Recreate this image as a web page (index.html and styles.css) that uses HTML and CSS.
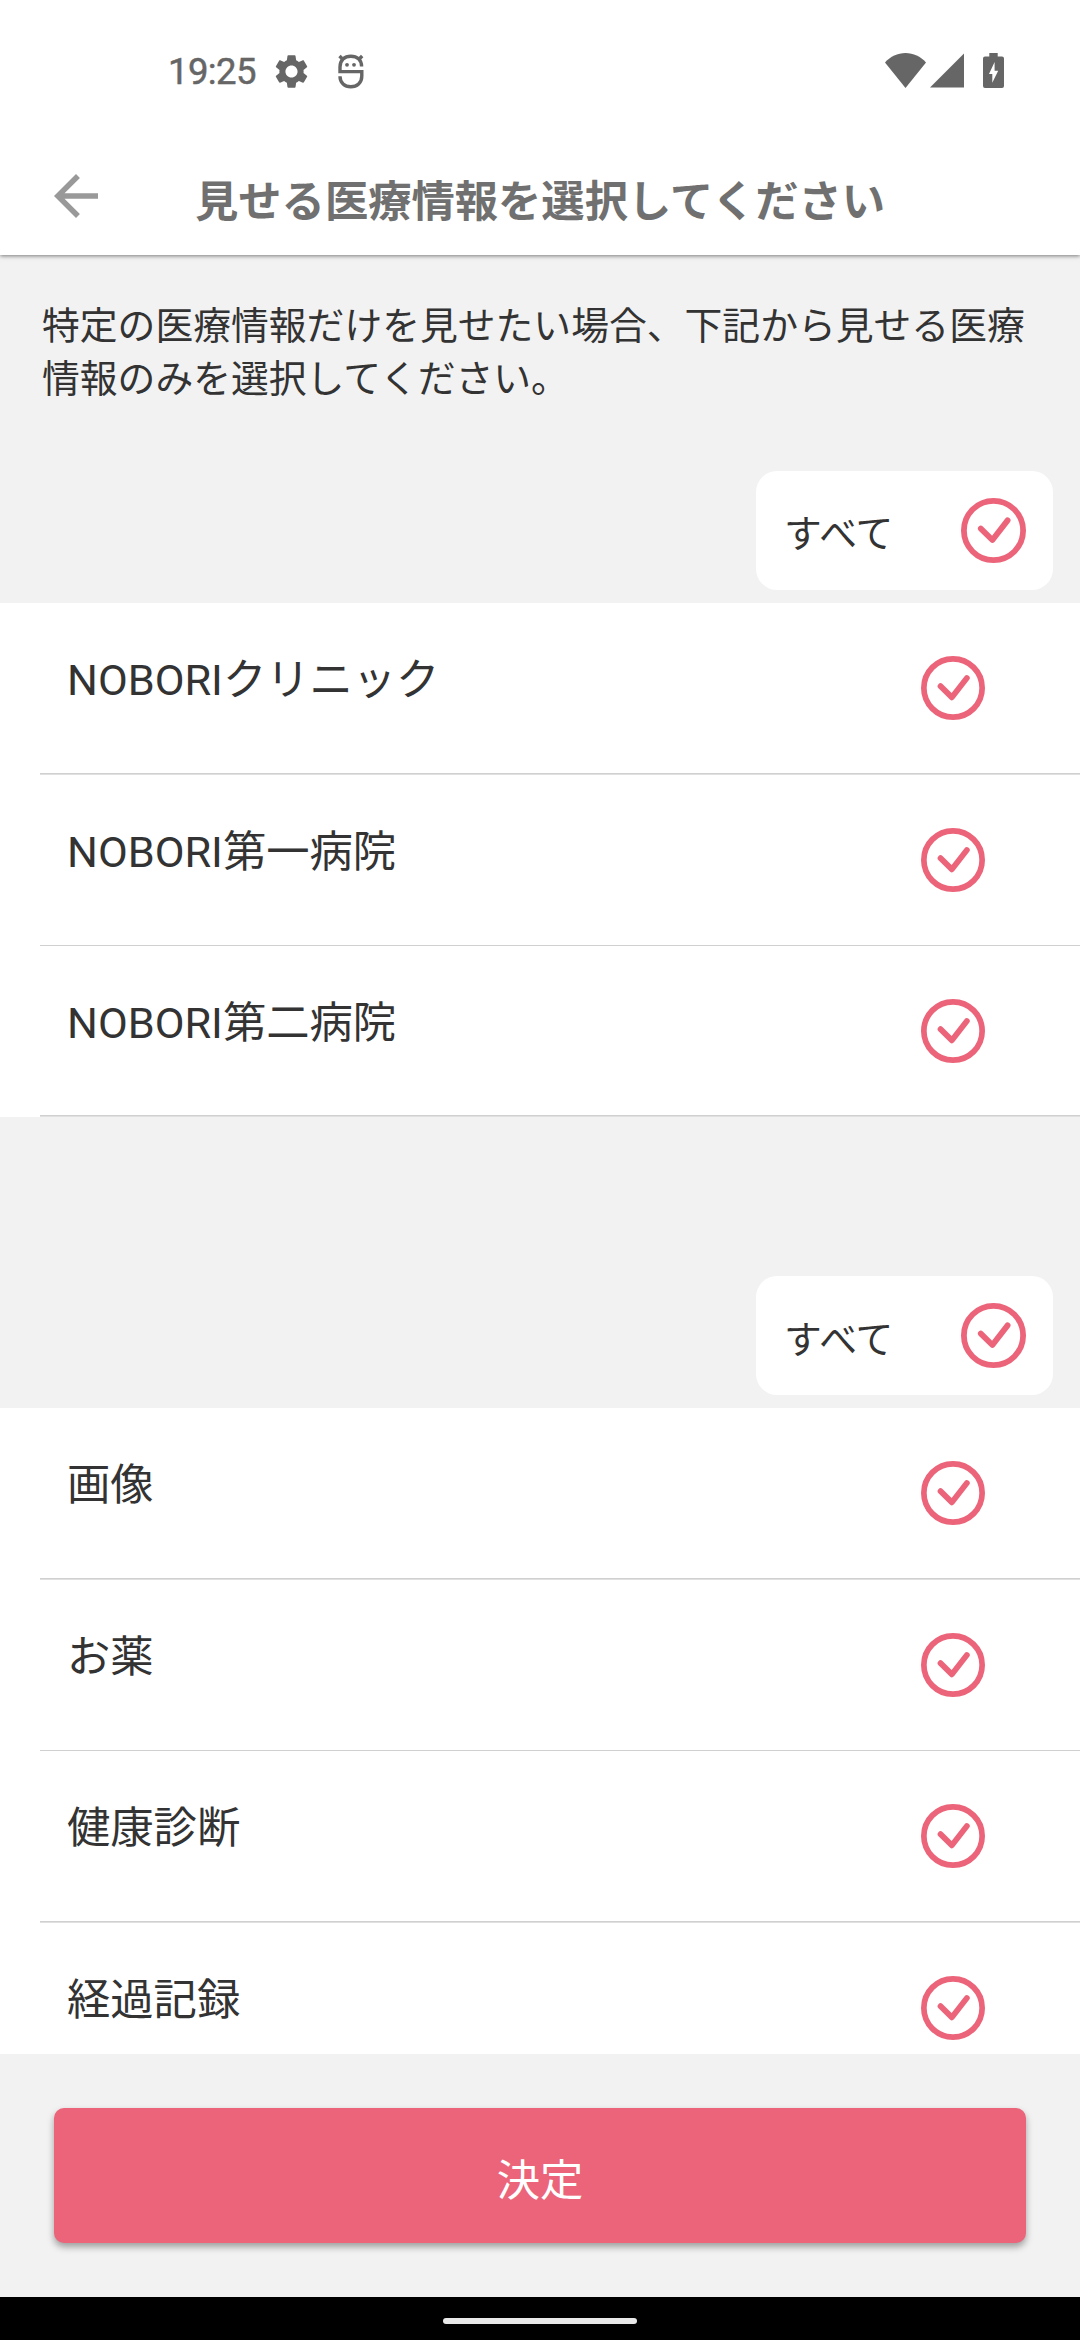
FILE: index.html
```html
<!DOCTYPE html>
<html lang="ja">
<head>
<meta charset="utf-8">
<title>見せる医療情報を選択してください</title>
<link rel="stylesheet" href="styles.css">
</head>
<body>
<svg width="0" height="0" class="defs" aria-hidden="true">
  <symbol id="check" viewBox="0 0 65 65">
    <circle cx="32.5" cy="32.5" r="29.6" fill="none" stroke="#ec6479" stroke-width="5.8"/>
    <path d="M19.8 30.6 31.4 42 46.6 22.4" fill="none" stroke="#ec6479" stroke-width="5.8" stroke-linecap="round" stroke-linejoin="round"/>
  </symbol>
</svg>
<div class="screen">
  <header class="top">
    <div class="status">
      <span class="clock">19:25</span>
      <svg class="gear" viewBox="2.2 2 19.6 20"><path fill="#666" d="M19.14 12.94c.04-.3.06-.61.06-.94 0-.32-.02-.64-.07-.94l2.03-1.58c.18-.14.23-.41.12-.61l-1.92-3.32c-.12-.22-.37-.29-.59-.22l-2.39.96c-.5-.38-1.03-.7-1.62-.94l-.36-2.54c-.04-.24-.24-.41-.48-.41h-3.84c-.24 0-.43.17-.47.41l-.36 2.54c-.59.24-1.13.57-1.62.94l-2.39-.96c-.22-.08-.47 0-.59.22L2.74 8.87c-.12.21-.08.47.12.61l2.03 1.58c-.05.3-.09.63-.09.94s.02.64.07.94l-2.03 1.58c-.18.14-.23.41-.12.61l1.92 3.32c.12.22.37.29.59.22l2.39-.96c.5.38 1.03.7 1.62.94l.36 2.54c.05.24.24.41.48.41h3.84c.24 0 .44-.17.47-.41l.36-2.54c.59-.24 1.13-.56 1.62-.94l2.39.96c.22.08.47 0 .59-.22l1.92-3.32c.12-.22.07-.47-.12-.61l-2.01-1.58zM12 15.6c-1.98 0-3.6-1.62-3.6-3.6s1.62-3.6 3.6-3.6 3.6 1.62 3.6 3.6-1.62 3.6-3.6 3.6z"/></svg>
      <svg class="face" viewBox="0 0 26 35"><g fill="none" stroke="#666" stroke-width="3.4"><path d="M23.6 12.5C23.6 5.500 19 2.200 12.800 2.200S2 6 2 13V17.600H23.800V22C23.800 29 19 32.800 12.800 32.800S2 29 2 22.300"/><path d="M1.500 2 5 5.500M24.200 2 20.700 5.500"/></g><circle cx="9" cy="10.800" r="1.900" fill="#666"/><circle cx="16" cy="10.800" r="1.900" fill="#666"/></svg>
      <svg class="wifi" viewBox="0 0 41 35"><path fill="#666" d="M20.500 35 0 9.500C5.500 3.500 12.500 0 20.500 0S35.500 3.500 41 9.500Z"/></svg>
      <svg class="signal" viewBox="0 0 35 35"><path fill="#666" d="M35 0V35H0Z"/></svg>
      <svg class="battery" viewBox="0 0 21 35"><path fill="#666" fill-rule="evenodd" d="M6.300 0H14.700V3.500H19Q21 3.500 21 5.500V33Q21 35 19 35H2Q0 35 0 33V5.500Q0 3.500 2 3.500H6.300ZM11.600 9 6 21H9.300V29.800L15.200 17.800H11.600Z"/></svg>
    </div>
    <div class="bar">
      <svg class="back" viewBox="0 0 24 24"><path fill="#999" d="M20 11H7.830l5.590-5.590L12 4l-8 8 8 8 1.410-1.410L7.830 13H20v-2z"/></svg>
      <h1 class="title">見せる医療情報を選択してください</h1>
    </div>
  </header>
  <main class="content">
    <p class="intro">特定の医療情報だけを見せたい場合、下記から見せる医療情報のみを選択してください。</p>
    <section class="group">
      <div class="group-head"><div class="all"><span>すべて</span><svg class="all-icon"><use href="#check"/></svg></div></div>
      <ul class="list">
        <li class="row tall"><span>NOBORIクリニック</span><svg class="icon"><use href="#check"/></svg></li>
        <li class="row thin"><span>NOBORI第一病院</span><svg class="icon"><use href="#check"/></svg></li>
        <li class="row last"><span>NOBORI第二病院</span><svg class="icon"><use href="#check"/></svg></li>
      </ul>
    </section>
    <section class="group second">
      <div class="group-head"><div class="all"><span>すべて</span><svg class="all-icon"><use href="#check"/></svg></div></div>
      <ul class="list">
        <li class="row tall"><span>画像</span><svg class="icon"><use href="#check"/></svg></li>
        <li class="row thin"><span>お薬</span><svg class="icon"><use href="#check"/></svg></li>
        <li class="row tall"><span>健康診断</span><svg class="icon"><use href="#check"/></svg></li>
        <li class="row"><span>経過記録</span><svg class="icon"><use href="#check"/></svg></li>
      </ul>
    </section>
  </main>
  <footer class="action"><button class="submit">決定</button></footer>
  <div class="nav"><div class="pill"></div></div>
</div>
</body>
</html>
```
FILE: styles.css
```css
* { box-sizing: border-box; margin: 0; padding: 0; }
body {
  width: 1080px;
  height: 2340px;
  overflow: hidden;
  font-family: Roboto, "Noto Sans CJK JP", sans-serif;
  color: #333;
  background: #f2f2f2;
}
.defs { display: none; }
svg { display: block; flex: none; }
.screen { display: flex; flex-direction: column; height: 2340px; }

.top {
  flex: none;
  height: 255px;
  background: #fff;
  box-shadow: 0 1px 4px rgba(0, 0, 0, .5);
  z-index: 1;
}
.status { display: flex; align-items: flex-start; height: 140px; padding: 53px 76px 0 168px; }
.clock { width: 107px; padding-top: 1px; font-size: 36.5px; font-weight: 400; line-height: 35px; letter-spacing: -.6px; color: #666; -webkit-text-stroke: .5px #666; }
.gear { width: 33px; height: 35px; margin-top: 1px; }
.face { width: 26px; height: 35px; margin: 1px auto 0 30px; }
.wifi { width: 41px; height: 35px; }
.signal { width: 34px; height: 35px; margin: 0 19px 0 4px; }
.battery { width: 21px; height: 35px; }
.bar { display: flex; height: 115px; padding-left: 43px; }
.back { width: 66px; height: 66px; margin-top: 23px; }
.title {
  margin: 28px 0 0 86px;
  font-family: "Noto Sans CJK JP", sans-serif;
  font-size: 43.3px;
  font-weight: 700;
  line-height: 60px;
  color: #707070;
}

.content { flex: 1; min-height: 0; overflow: hidden; }
.intro {
  height: 216px;
  padding: 41px 42px 0;
  font-family: "Noto Sans CJK JP", sans-serif;
  font-size: 37.8px;
  line-height: 53px;
}
.group-head { display: flex; justify-content: flex-end; height: 132px; padding-right: 27px; }
.second .group-head { height: 291px; padding-top: 159px; }
.all {
  display: flex;
  justify-content: space-between;
  width: 297px;
  height: 119px;
  padding: 27px 27px 0 28px;
  border-radius: 21px;
  background: #fff;
  font-family: "Noto Sans CJK JP", sans-serif;
  font-size: 37.8px;
  line-height: 65px;
}
.second .all { line-height: 67px; }
.all-icon { width: 65px; height: 65px; }
.list { list-style: none; }
.row {
  display: flex;
  justify-content: space-between;
  height: 171px;
  padding: 53px 95px 0 67px;
  background: linear-gradient(#d0d0d0, #d0d0d0) 40px 100% / 100% 1px no-repeat #fff;
  font-size: 43.3px;
  line-height: 50px;
}
.tall, .last { background: linear-gradient(#d0d0d0 50%, #e0e0e0 50%) 40px 100% / 100% 2px no-repeat #fff; }
.tall { height: 172px; }
.icon { width: 64px; height: 64px; }

.action { flex: none; height: 243px; padding: 54px; background: #f2f2f2; }
.submit {
  display: block;
  width: 972px;
  height: 135px;
  padding-top: 2px;
  border: 0;
  border-radius: 10px;
  background: #ec6479;
  box-shadow: 0 4px 7px rgba(0, 0, 0, .35);
  font-family: "Noto Sans CJK JP", sans-serif;
  font-size: 43.3px;
  color: #fff;
}
.nav { flex: none; height: 43px; padding-top: 21px; background: #000; }
.pill { width: 194px; height: 6px; margin: 0 auto; border-radius: 3px; background: #e8e8e8; }
```
